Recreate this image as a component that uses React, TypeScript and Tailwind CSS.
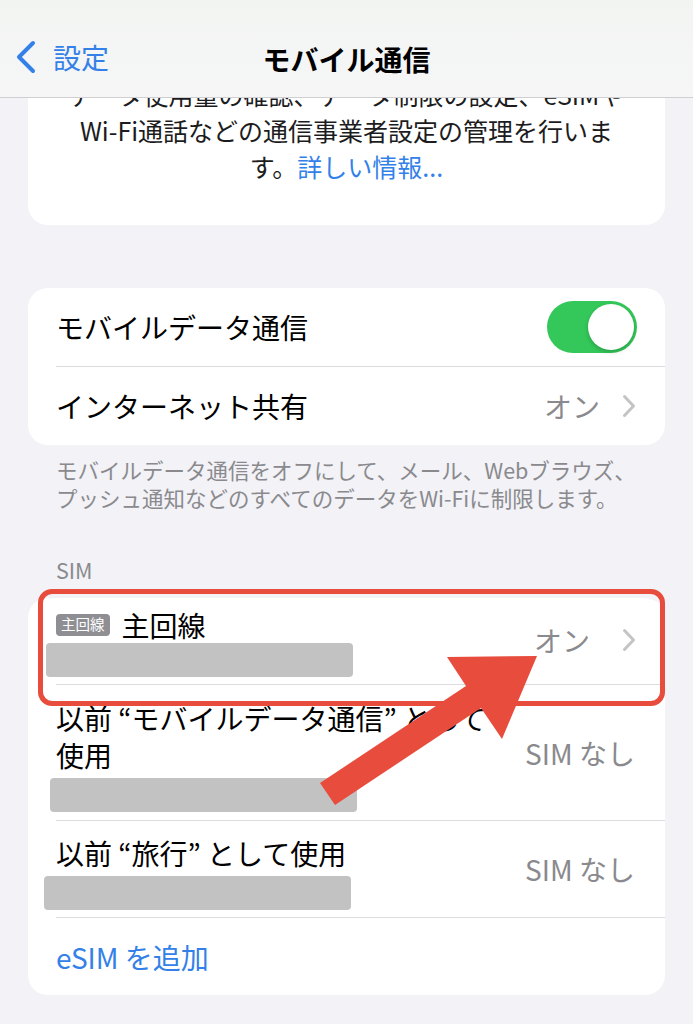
import React from "react";

const FONT = { fontFamily: '"Noto Sans CJK JP", "Noto Sans", sans-serif' };

function Chevron() {
  return (
    <svg width="14" height="24" viewBox="0 0 14 24" fill="none" stroke="#c4c4c7" strokeWidth="3" strokeLinecap="round" strokeLinejoin="round" className="shrink-0">
      <path d="M2.5 2.5 11.5 12 2.5 21.5" />
    </svg>
  );
}

function Separator() {
  return <div className="ml-[28px] h-px bg-[#dcdce0]" />;
}

function Toggle() {
  return (
    <div className="w-[90px] h-[52px] rounded-full bg-[#34c759] flex items-center justify-end pr-[3px] shrink-0">
      <div className="w-[46px] h-[46px] rounded-full bg-white shadow-[0_2px_4px_rgba(0,0,0,0.2)]" />
    </div>
  );
}

function Redacted({ offset }: { offset: string }) {
  return <div className={`h-[34px] w-[307px] rounded-[4px] bg-[#c2c2c2] ${offset}`} />;
}

export default function App() {
  return (
    <div className="relative w-[693px] h-[1024px] overflow-hidden bg-[#f2f2f7]" style={FONT}>
      {/* scrolled content */}
      <div className="flex flex-col px-[28px]">
        {/* carrier info card (partly under the nav bar) */}
        <div className="bg-white rounded-b-[20px] pt-[76px] pb-[41px] text-center text-[25px] leading-[36px] text-[#1c1c1e]">
          <p>データ使用量の確認、データ制限の設定、eSIMや</p>
          <p>Wi-Fi通話などの通信事業者設定の管理を行いま</p>
          <p>
            す。<span className="text-[#3381e8]">詳しい情報...</span>
          </p>
        </div>

        {/* mobile data card */}
        <div className="mt-[63px] bg-white rounded-[20px] text-[28px] text-black">
          <div className="h-[78px] flex items-center justify-between pl-[28px] pr-[28px]">
            <span>モバイルデータ通信</span>
            <Toggle />
          </div>
          <Separator />
          <div className="h-[78px] flex items-center justify-between pl-[28px] pr-[29px]">
            <span>インターネット共有</span>
            <div className="flex items-center gap-[22px]">
              <span className="text-[#8a8a8e]">オン</span>
              <Chevron />
            </div>
          </div>
        </div>

        <div className="mt-[11px] px-[28px] text-[21.5px] leading-[28px] text-[#8a8a8e] whitespace-nowrap">
          <p>モバイルデータ通信をオフにして、メール、Webブラウズ、</p>
          <p>プッシュ通知などのすべてのデータをWi-Fiに制限します。</p>
        </div>

        <p className="mt-[44px] px-[28px] text-[21.5px] leading-[28px] text-[#8a8a8e]">SIM</p>

        {/* SIM card */}
        <div className="mt-[14px] bg-white rounded-[20px] text-[28px] text-black">
          <div className="h-[86px] flex items-center justify-between pl-[28px] pr-[29px]">
            <div className="flex flex-col pt-[2px]">
              <div className="flex items-center gap-[12px] h-[34px]">
                <span className="rounded-[4px] bg-[#8e8e93] px-[5px] h-[22px] flex items-center text-[14.5px] leading-none text-white">主回線</span>
                <span>主回線</span>
              </div>
              <Redacted offset="mt-[1px] ml-[-10px]" />
            </div>
            <div className="flex items-center gap-[32px] mt-[-2px]">
              <span className="text-[#8a8a8e]">オン</span>
              <Chevron />
            </div>
          </div>
          <Separator />
          <div className="h-[135px] flex items-center justify-between pl-[28px] pr-[30px]">
            <div className="flex flex-col pt-[6px]">
              <p className="leading-[37px] whitespace-nowrap">
                以前 “モバイルデータ通信” として
                <br />
                使用
              </p>
              <Redacted offset="mt-[4px] ml-[-6px]" />
            </div>
            <span className="text-[#8a8a8e] whitespace-nowrap">SIM なし</span>
          </div>
          <Separator />
          <div className="h-[96px] flex items-center justify-between pl-[28px] pr-[30px]">
            <div className="flex flex-col pt-[6px]">
              <p className="leading-[37px]">以前 “旅行” として使用</p>
              <Redacted offset="mt-[4px] ml-[-12px]" />
            </div>
            <span className="text-[#8a8a8e] whitespace-nowrap">SIM なし</span>
          </div>
          <Separator />
          <div className="h-[77px] flex items-center pl-[28px]">
            <span className="text-[#3381e8]">eSIM を追加</span>
          </div>
        </div>
      </div>

      {/* translucent navigation bar */}
      <div className="absolute inset-x-0 top-0 h-[98px] border-b border-[#cfcfd3] bg-gradient-to-b from-[#f2f4f2] to-[#f6f6f7]">
        <div className="relative h-full flex items-end justify-center pb-[17px]">
          <div className="absolute left-[15px] bottom-[19px] flex items-center gap-[16px] text-[28px] text-[#3381e8]">
            <svg width="22" height="34" viewBox="0 0 22 34" fill="none" stroke="#3381e8" strokeWidth="4" strokeLinecap="round" strokeLinejoin="round">
              <path d="M18 3 4 17l14 14" />
            </svg>
            <span>設定</span>
          </div>
          <h1 className="text-[28px] font-bold text-black">モバイル通信</h1>
        </div>
      </div>

      {/* annotation: red highlight */}
      <div className="absolute left-[38px] top-[589px] w-[627px] h-[117px] rounded-[14px] border-[5px] border-[#e74c3c]" />

      {/* annotation: red arrow */}
      <svg className="absolute left-[300px] top-[640px]" width="260" height="180" viewBox="300 640 260 180">
        <polygon
          points="320,783 466,686 447,657 537,656 502,739 481,708 335,805"
          fill="#e84c3d"
        />
      </svg>
    </div>
  );
}
